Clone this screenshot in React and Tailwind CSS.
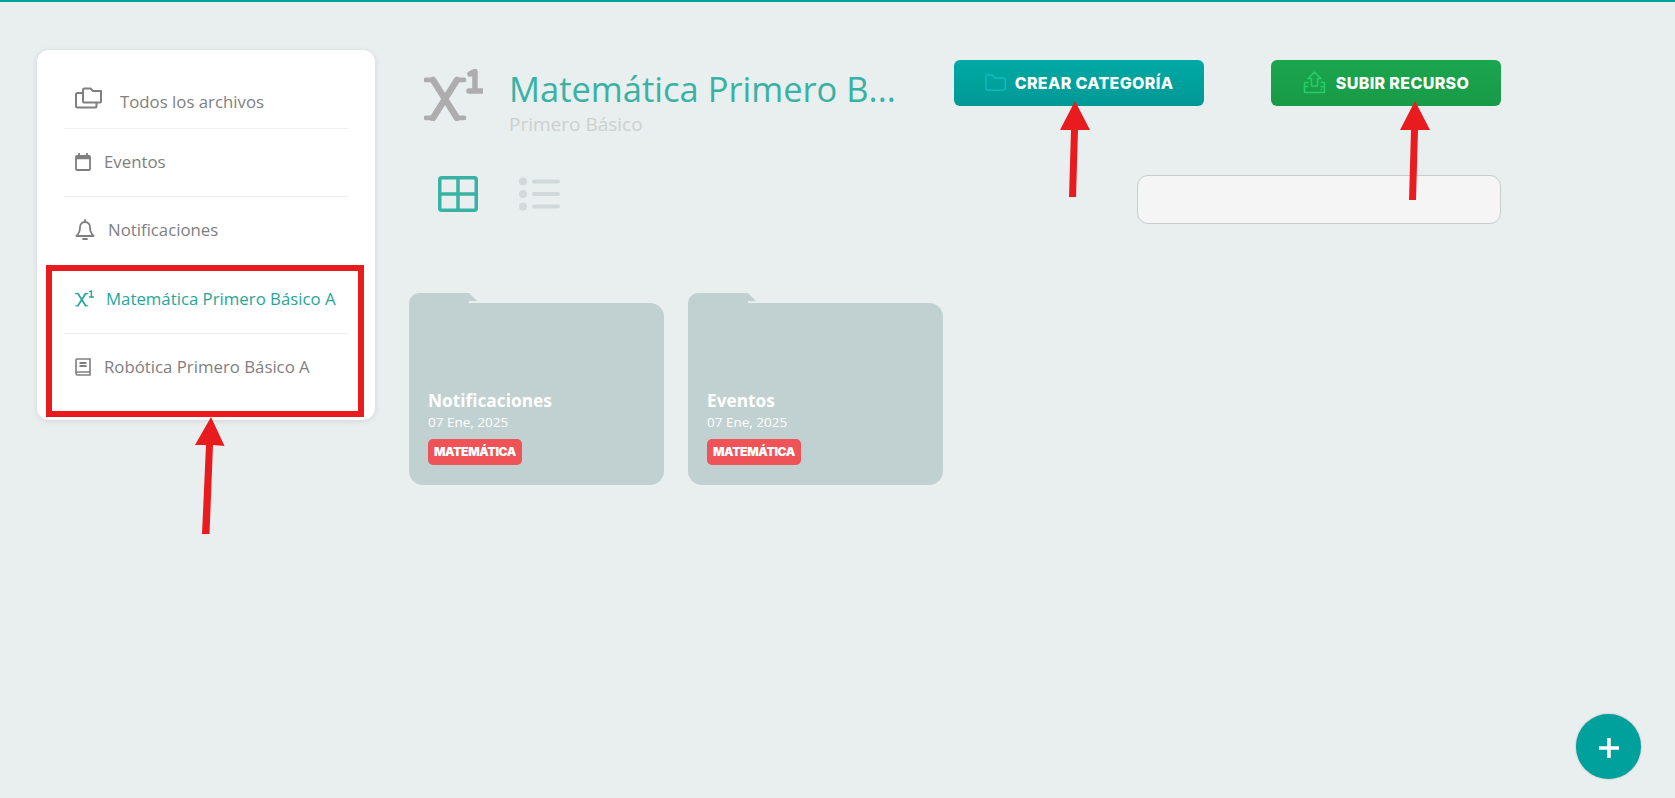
import React from "react";

const Sep = () => <div className="h-px bg-[#eceeef]" />;

function FoldersIcon() {
  return (
    <svg width="28" height="23" viewBox="0 0 28 23" fill="none" stroke="#7f7f7f" strokeWidth="2" strokeLinejoin="round">
      <path d="M8 15.5V4a1.5 1.5 0 0 1 1.5-1.5h6L18 5h8v10.5a1 1 0 0 1-1 1H9a1 1 0 0 1-1-1z" />
      <path d="M8 7H2.5A1.5 1.5 0 0 0 1 8.5v11.5A1.5 1.5 0 0 0 2.5 21.5H20a1.5 1.5 0 0 0 1.5-1.5v-3.5" />
    </svg>
  );
}
function CalendarIcon() {
  return (
    <svg width="16" height="18" viewBox="0 0 16 18" fill="none" stroke="#7f7f7f" strokeWidth="1.8">
      <rect x="1" y="3" width="14" height="14" rx="1" />
      <path d="M1 5h14" strokeWidth="2.5" />
      <path d="M4 0v3M12 0v3" />
    </svg>
  );
}
function BellIcon() {
  return (
    <svg width="20" height="22" viewBox="0 0 20 22" fill="none" stroke="#7f7f7f" strokeWidth="1.8" strokeLinejoin="round" strokeLinecap="round">
      <path d="M10 3c-3.2 0-5 2.5-5 5.5 0 4-1 6-3.6 8.5h17.2C16 14.500 15 12.500 15 8.500 15 5.500 13.200 3 10 3z" />
      <path d="M10 1v2M8 20h4" />
    </svg>
  );
}
function XOne({ size, color, stroke = 2 }) {
  return (
    <svg width={size} height={size * 0.88} viewBox="0 0 59 52" fill="none" stroke={color} strokeLinecap="round" strokeLinejoin="round">
      <path d="M9 11 L33 49 M33 11 L9 49" strokeWidth={stroke * 2.6} />
      <path d="M2 11H8M34 11H40M2 49H8M34 49H40" strokeWidth={stroke * 1.9} />
      <path d="M46 5L51 2.500V21M45 22H58" strokeWidth={stroke * 2.2} />
    </svg>
  );
}
function BookIcon() {
  return (
    <svg width="16" height="18" viewBox="0 0 16 18" fill="none" stroke="#7f7f7f" strokeWidth="1.600">
      <path d="M1 15V2a1 1 0 0 1 1-1h13v13H2.500A1.500 1.500 0 0 0 1 15.500 1.500 1.500 0 0 0 2.500 17H15v-3" />
      <path d="M4.500 5h7M4.500 8h7" strokeWidth="1.800" />
    </svg>
  );
}
function GridIcon() {
  return (
    <svg width="40" height="36" viewBox="0 0 40 36" fill="none" stroke="#38b2a4" strokeWidth="3.500">
      <rect x="1.750" y="1.750" width="36.500" height="32.500" rx="2" />
      <path d="M20 2v32M2 18h36" />
    </svg>
  );
}
function ListIcon() {
  return (
    <svg width="42" height="34" viewBox="0 0 42 34" fill="#d2d9da">
      <circle cx="4" cy="4.500" r="4" />
      <circle cx="4" cy="17" r="4" />
      <circle cx="4" cy="29.500" r="4" />
      <rect x="13" y="2.500" width="28" height="4" rx="2" />
      <rect x="13" y="15" width="28" height="4" rx="2" />
      <rect x="13" y="27.500" width="28" height="4" rx="2" />
    </svg>
  );
}
function FolderSmall() {
  return (
    <svg width="21" height="17" viewBox="0 0 21 17" fill="none" stroke="#10bfc4" strokeWidth="1.300" strokeLinejoin="round">
      <path d="M1 2.200C1 1.500 1.500 1 2.200 1h5.300l2.500 3h9c.7 0 1.300.6 1.300 1.300v9.500c0 .7-.6 1.300-1.300 1.300H2.200C1.500 16 1 15.500 1 14.800z" />
    </svg>
  );
}
function UploadIcon() {
  return (
    <svg width="23" height="23" viewBox="0 0 23 23" fill="none" stroke="#25cf68" strokeWidth="1.500" strokeLinejoin="round">
      <path d="M11.500 1 5 7.500h3.500V15h6V7.500H18z" />
      <path d="M5.500 11.500H1.500v10h20v-10h-4" />
      <path d="M1.500 15.500h4M17.500 15.500h4M17.500 18.500h1.500" />
    </svg>
  );
}

function Card({ title }) {
  return (
    <div className="w-[255px]">
      <div className="h-[10px] w-[68px] rounded-tl-[10px] bg-[#c1d1d1] [clip-path:polygon(0_0,60px_0,68px_8px,60px_8px,60px_100%,0_100%)]" />
      <div className="flex h-[182px] flex-col justify-end rounded-[14px] rounded-tl-none bg-[#c1d1d1] pb-[20px] pl-[19px]">
        <div className="text-[17.300px] font-bold leading-[24px] text-white">{title}</div>
        <div className="mt-[1px] text-[13.500px] leading-[17px] text-white">07 Ene, 2025</div>
        <div className="mt-[8px] flex h-[26px] w-[94px] items-center justify-center rounded-[5px] bg-[#ef5358] font-['Inter'] text-[12px] font-black tracking-[-0.3px] text-white">
          MATEMÁTICA
        </div>
      </div>
    </div>
  );
}

export default function App() {
  return (
    <div className="relative h-[798px] w-[1675px] overflow-hidden bg-[#e9eeee] font-['Open_Sans','Noto_Sans',sans-serif]">
      <div className="h-[2px] bg-[#00a09c]" />
      <div className="flex pt-[48px]">
        <aside className="ml-[37px] h-[370px] w-[338px] rounded-[12px] bg-white px-[27px] pt-[11px] text-[16.800px] text-[#808080] shadow-[0_1px_6px_rgba(0,0,0,0.1)]">
          <div className="flex h-[67px] items-start pl-[11px] pt-[25px]">
            <FoldersIcon />
            <span className="ml-[17px] mt-[4px] leading-[24px]">Todos los archivos</span>
          </div>
          <Sep />
          <div className="flex h-[67px] items-center pb-[2px] pl-[11px]">
            <CalendarIcon />
            <span className="ml-[13px]">Eventos</span>
          </div>
          <Sep />
          <div className="flex h-[68px] items-center pb-[2px] pl-[11px]">
            <BellIcon />
            <span className="ml-[13px]">Notificaciones</span>
          </div>
          <Sep />
          <div className="flex h-[67px] items-center pb-[2px] pl-[11px] text-[#26a69a]">
            <XOne size={19} color="#26a69a" stroke={2} />
            <span className="ml-[12px] whitespace-nowrap">Matemática Primero Básico A</span>
          </div>
          <Sep />
          <div className="flex h-[67px] items-center pb-[2px] pl-[11px]">
            <BookIcon />
            <span className="ml-[13px] whitespace-nowrap">Robótica Primero Básico A</span>
          </div>
        </aside>

        <main className="ml-[35px] w-[1091px] pt-[10px]">
          <div className="flex items-start">
            <div className="ml-[14px] mt-[9px] w-[59px] shrink-0">
              <XOne size={59} color="#adadad" stroke={2.500} />
            </div>
            <div className="ml-[26px] w-[386px] shrink-0">
              <div className="-mt-[1px] whitespace-nowrap text-[34.500px] leading-[60px] text-[#38b2a4]">Matemática Primero B...</div>
              <div className="-mt-[7px] text-[19px] leading-[24px] text-[#cdd0d0]">Primero Básico</div>
            </div>
            <button className="ml-[59px] flex h-[46px] w-[250px] items-center justify-center rounded-[6px] bg-gradient-to-b from-[#00a9a4] to-[#009996] pb-[1px] font-['Inter'] text-[16px] font-extrabold tracking-[0.35px] text-white">
              <FolderSmall />
              <span className="ml-[9px]">CREAR CATEGORÍA</span>
            </button>
            <button className="ml-[67px] flex h-[46px] w-[230px] items-center justify-center rounded-[6px] bg-gradient-to-b from-[#1ba64e] to-[#189a46] pb-[1px] font-['Inter'] text-[16px] font-extrabold tracking-[0.35px] text-white">
              <UploadIcon />
              <span className="ml-[10px]">SUBIR RECURSO</span>
            </button>
          </div>

          <div className="mt-[39px] flex items-start">
            <div className="ml-[28px] mt-[1px]"><GridIcon /></div>
            <div className="ml-[41px] mt-[2px]"><ListIcon /></div>
            <input className="ml-auto h-[49px] w-[364px] rounded-[11px] border border-[#c9cccc] bg-[#f5f5f5]" aria-label="Buscar" />
          </div>

          <div className="-ml-[1px] mt-[69px] flex gap-[24px]">
            <Card title="Notificaciones" />
            <Card title="Eventos" />
          </div>
        </main>
      </div>

      <button className="absolute left-[1576px] top-[714px] flex h-[65px] w-[65px] items-center justify-center rounded-full bg-[#00a09c] pt-[3px] shadow-[0_0_2px_rgba(0,0,0,0.3)]">
        <svg width="20" height="20" viewBox="0 0 20 20" stroke="#fff" strokeWidth="3.500"><path d="M10 0v20M0 10h20" /></svg>
      </button>

      {/* annotations drawn over the screenshot */}
      <div className="absolute left-[46px] top-[265px] h-[152px] w-[318px] border-[6px] border-[#e81c1f]" />
      <svg className="pointer-events-none absolute left-0 top-0" width="1675" height="798" fill="#e81c1f">
        <polygon points="211,417 224.500,446 213,445 209.500,534 202,534 206,445 195,445" />
        <polygon points="1075,101 1090,130 1078,130 1076,197 1069,197 1071,130 1060,130" />
        <polygon points="1415,101 1430,130 1418,130 1416,200 1409,200 1411,130 1400,130" />
      </svg>
    </div>
  );
}
